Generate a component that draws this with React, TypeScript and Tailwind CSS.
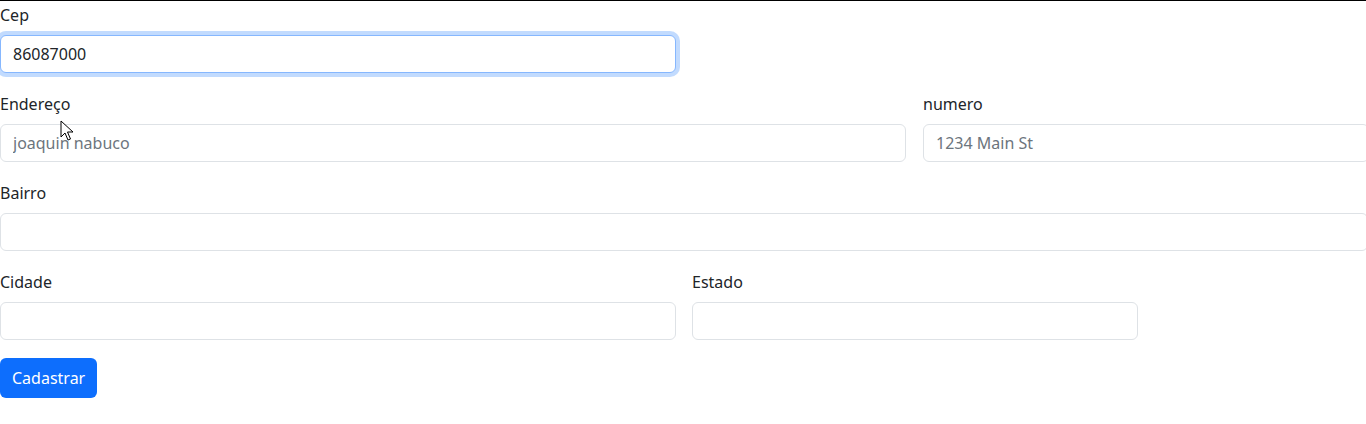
const Field = ({
  label,
  value,
  placeholder,
  focused,
  className,
}: {
  label: string;
  value?: string;
  placeholder?: string;
  focused?: boolean;
  className?: string;
}) => {
  return (
    <div className={className}>
      <label className="block h-6 leading-6 mb-2">{label}</label>
      <input
        readOnly
        value={value ?? ""}
        placeholder={placeholder}
        className={
          "block w-full h-[38px] px-3 rounded-[6px] bg-white outline-none placeholder:text-[#6c757d] " +
          (focused
            ? "border border-[#86b7fe] shadow-[0_0_0_4px_rgba(13,110,253,0.25)]"
            : "border border-[#dee2e6]")
        }
      />
    </div>
  );
};

const Cursor = () => (
  <svg
    className="absolute left-[60px] top-[119px]"
    width="14"
    height="21"
    viewBox="0 0 14 21"
  >
    <path
      d="M1 1 L1 17 L5 13 L8 20 L10.5 19 L7.5 12 L13 12 Z"
      fill="white"
      stroke="black"
      strokeWidth="1"
      strokeLinejoin="round"
    />
  </svg>
);

export default function App() {
  return (
    <div className="relative w-[1366px] h-[424px] overflow-hidden bg-white border-t border-black font-['Segoe_UI','Noto_Sans',sans-serif] text-[16px] text-[#212529]">
      <div className="pt-[2px]">
        {/* Cep */}
        <Field label="Cep" value="86087000" focused className="w-[676px]" />

        {/* Endereço + numero */}
        <div className="flex gap-[17px] mt-[19px] w-[1384px]">
          <Field
            label="Endereço"
            placeholder="joaquin nabuco"
            className="w-[906px]"
          />
          <Field
            label="numero"
            placeholder="1234 Main St"
            className="w-[446px]"
          />
        </div>

        {/* Bairro */}
        <Field label="Bairro" className="mt-[19px] w-[1368px]" />

        {/* Cidade + Estado */}
        <div className="flex gap-4 mt-[19px]">
          <Field label="Cidade" className="w-[676px]" />
          <Field label="Estado" className="w-[446px]" />
        </div>

        <button className="mt-[18px] h-[40px] px-3 rounded-[6px] bg-[#0d6efd] text-white leading-6">
          Cadastrar
        </button>
      </div>
      <Cursor />
    </div>
  );
}
